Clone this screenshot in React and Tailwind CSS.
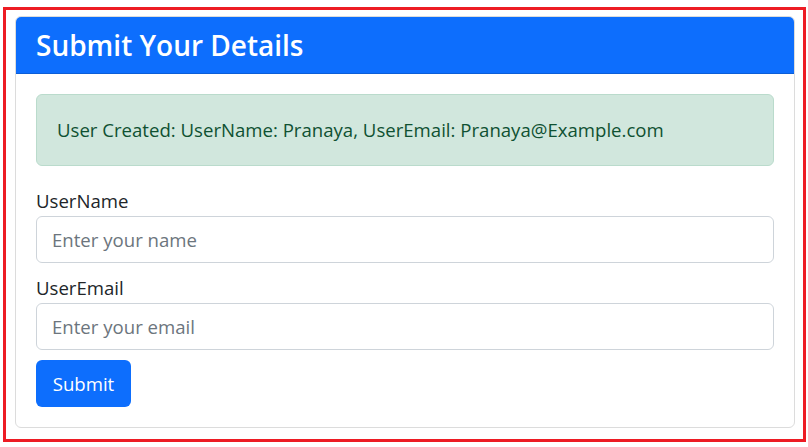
export default function App() {
  return (
    <div
      className="w-[808px] h-[447px] bg-white pt-[7px] pl-[3px]"
      style={{ fontFamily: '"Open Sans", "Noto Sans", sans-serif' }}
    >
      <div className="w-[803px] h-[435px] border-[3px] border-[#ed1c24] pl-[9px] pt-[6px]">
        <div className="w-[780px] bg-white border border-[#dcdcdc] rounded-[6px] overflow-hidden">
          <div className="bg-[#0d6efd] border-b border-[#0b5ed7] px-[20px] h-[57px] flex items-center">
            <h4 className="text-white text-[28px] font-semibold leading-[36px]">
              Submit Your Details
            </h4>
          </div>

          <div className="p-[20px]">
            <div className="h-[72px] flex items-center px-[20px] bg-[#d1e7dd] border border-[#badbcc] rounded-[6px] text-[#0f5132] text-[18.6px]">
              User Created: UserName: Pranaya, UserEmail: Pranaya@Example.com
            </div>

            <div className="mt-[20px] mb-[10px]">
              <label className="block h-[30px] leading-[30px] text-[18.6px] text-[#212529]">
                UserName
              </label>
              <input
                type="text"
                placeholder="Enter your name"
                className="block w-full h-[47px] px-[15px] border border-[#ced4da] rounded-[6px] text-[18.6px] placeholder:text-[#6c757d] outline-none"
              />
            </div>

            <div className="mb-[10px]">
              <label className="block h-[30px] leading-[30px] text-[18.6px] text-[#212529]">
                UserEmail
              </label>
              <input
                type="email"
                placeholder="Enter your email"
                className="block w-full h-[47px] px-[15px] border border-[#ced4da] rounded-[6px] text-[18.6px] placeholder:text-[#6c757d] outline-none"
              />
            </div>

            <button className="h-[47px] w-[95px] bg-[#0d6efd] text-white text-[18.6px] rounded-[6px]">
              Submit
            </button>
          </div>
        </div>
      </div>
    </div>
  );
}
